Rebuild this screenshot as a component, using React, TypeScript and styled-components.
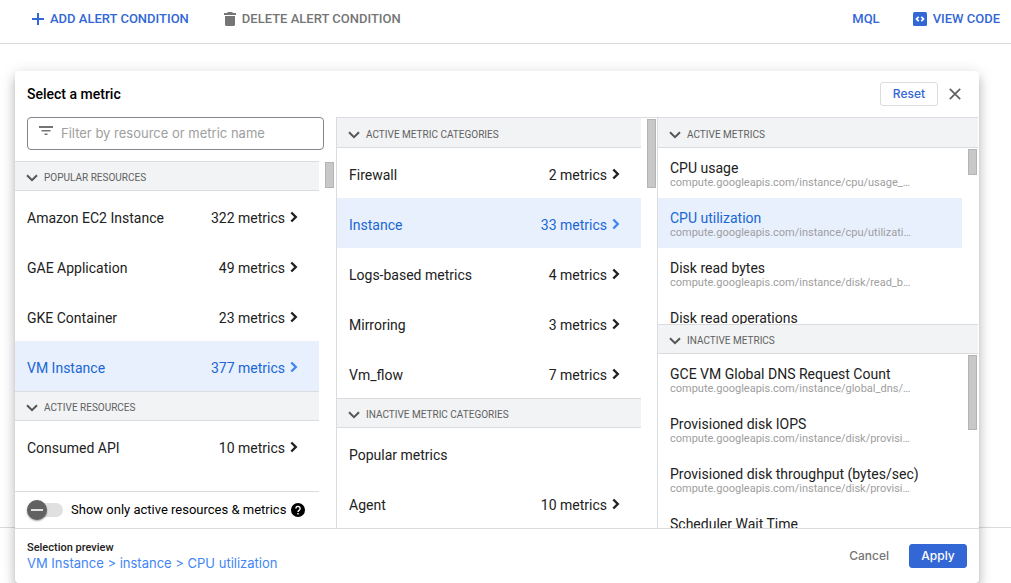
import React, { useState } from 'react';
import styled, { createGlobalStyle } from 'styled-components';

const BLUE = '#3367d6';
const LINE = '#dadce0';

const GlobalStyle = createGlobalStyle`
  * { box-sizing: border-box; }
  body {
    margin: 0;
    background: #fff;
    color: #212121;
    font-family: Roboto, "Liberation Sans", sans-serif;
  }
  button, input { font-family: inherit; margin: 0; }
`;

const Page = styled.div`
  min-height: 100vh;
`;

const Toolbar = styled.header`
  display: flex;
  align-items: center;
  justify-content: space-between;
  height: 44px;
  padding: 0 11px 6px 30px;
  border-bottom: 1px solid ${LINE};
`;

const ToolGroup = styled.div`
  display: flex;
  gap: 33px;
`;

const ToolButton = styled.button<{ $muted?: boolean }>`
  display: flex;
  align-items: center;
  gap: 6px;
  padding: 0;
  border: 0;
  background: none;
  color: ${p => (p.$muted ? '#757575' : BLUE)};
  font-size: 13px;
  font-weight: 500;
  line-height: 20px;
  text-transform: uppercase;
  white-space: nowrap;
`;

const Workspace = styled.main`
  position: relative;
  height: 484px;
  border-bottom: 1px solid ${LINE};
`;

const Dialog = styled.section`
  position: absolute;
  top: 27px;
  left: 15px;
  right: 32px;
  background: #fff;
  border-radius: 4px;
  box-shadow: 0 5px 5px -3px rgba(0, 0, 0, 0.2), 0 8px 10px 1px rgba(0, 0, 0, 0.14),
    0 3px 14px 2px rgba(0, 0, 0, 0.12);
`;

const DialogHeader = styled.div`
  display: flex;
  align-items: center;
  gap: 7px;
  height: 46px;
  padding: 0 14px 0 12px;
`;

const Title = styled.h1`
  flex: 1;
  margin: 0;
  color: #000;
  font-size: 14px;
  font-weight: 500;
  line-height: 20px;
`;

const ActionButton = styled.button<{ $kind: 'outline' | 'text' | 'solid' }>`
  height: 24px;
  min-width: 58px;
  padding: 0 11px;
  border-radius: 3px;
  border: 1px solid ${p => ({ outline: LINE, text: 'transparent', solid: BLUE })[p.$kind]};
  background: ${p => (p.$kind === 'solid' ? BLUE : 'none')};
  color: ${p => ({ outline: BLUE, text: '#757575', solid: '#fff' })[p.$kind]};
  font-family: Inter, sans-serif;
  font-size: 12px;
  font-weight: 500;
  line-height: 16px;
`;

const IconButton = styled.button`
  display: flex;
  padding: 4px;
  border: 0;
  background: none;
`;

const Columns = styled.div`
  display: grid;
  grid-template-columns: repeat(3, 1fr);
  height: 411px;
  padding-right: 1px;
`;

const ResourceColumn = styled.div`
  display: flex;
  flex-direction: column;
  min-width: 0;
  padding-right: 1px;
`;

const ListColumn = styled.div`
  display: flex;
  flex-direction: column;
  min-width: 0;
  border-top: 1px solid ${LINE};
  border-left: 1px solid ${LINE};
`;

const MetricColumn = styled(ListColumn)`
  display: grid;
  grid-template-rows: 206px 1fr;
  min-height: 0;
`;

const FilterBox = styled.label`
  display: flex;
  align-items: center;
  gap: 8px;
  height: 33px;
  margin: 0 11px 11px 12px;
  padding: 0 11px;
  border: 1px solid #80868b;
  border-radius: 4px;
`;

const FilterInput = styled.input`
  flex: 1;
  min-width: 0;
  padding: 0 0 2px;
  border: 0;
  outline: 0;
  background: none;
  font-family: Inter, sans-serif;
  font-size: 13px;
  line-height: 20px;
  &::placeholder { color: #9e9e9e; }
`;

const FilterIcon = styled.svg`
  margin-bottom: 6px;
`;

const ScrollArea = styled.div`
  display: flex;
  flex: 1;
  min-height: 0;
  overflow: hidden;
`;

const List = styled.div`
  flex: 1;
  min-width: 0;
`;

const ScrollTrack = styled.div`
  flex: none;
  width: 16px;
  padding: 1px 1px 0 6px;
`;

const ScrollThumb = styled.div<{ $size: number }>`
  height: ${p => p.$size}px;
  background: #c8c8c8;
  border: 1px solid #b4b4b4;
`;

const MetricSection = styled.section`
  display: flex;
  flex-direction: column;
  min-height: 0;
`;

const SectionButton = styled.button<{ $first?: boolean }>`
  display: flex;
  align-items: center;
  flex: none;
  gap: 6px;
  width: 100%;
  height: 30px;
  padding: ${p => (p.$first ? 4 : 3)}px 11px 0;
  border: 0;
  border-top: ${p => (p.$first ? '0' : `1px solid ${LINE}`)};
  border-bottom: 1px solid ${LINE};
  background: #f1f3f4;
  color: #616161;
  font-size: 10px;
  line-height: 16px;
  text-transform: uppercase;
  white-space: nowrap;
`;

const Row = styled.button<{ $selected?: boolean }>`
  display: flex;
  align-items: center;
  width: 100%;
  height: 50px;
  padding: 4px 21px 0 12px;
  border: 0;
  background: ${p => (p.$selected ? '#e8f0fe' : '#fff')};
  color: ${p => (p.$selected ? '#1967d2' : '#212121')};
  font-size: 14px;
  line-height: 20px;
  text-align: left;
  white-space: nowrap;
`;

const RowName = styled.span`
  flex: 1;
`;

const RowArrow = styled.svg`
  margin: 0 0 2px 5px;
`;

const MetricRow = styled(Row)`
  flex-direction: column;
  align-items: stretch;
  padding: 10px 12px 0;
`;

const MetricName = styled.span`
  line-height: 20px;
`;

const MetricPath = styled.span`
  color: #9e9e9e;
  font-size: 11px;
  line-height: 10px;
`;

const ToggleBar = styled.div`
  display: flex;
  align-items: center;
  height: 37px;
  margin-right: 16px;
  padding: 0 12px;
  border-top: 1px solid ${LINE};
  color: #000;
  font-size: 13px;
`;

const ToggleLabel = styled.label`
  display: flex;
  align-items: center;
  gap: 8px;
  line-height: 20px;
  white-space: nowrap;
`;

const Toggle = styled.input`
  appearance: none;
  display: flex;
  align-items: center;
  width: 36px;
  height: 14px;
  border-radius: 7px;
  background: #e0e0e0;
  &::before {
    content: '';
    width: 20px;
    height: 20px;
    flex: none;
    border-radius: 50%;
    background: linear-gradient(#e0e0e0, #e0e0e0) center / 12px 2px no-repeat #616161;
    box-shadow: 0 1px 2px rgba(0, 0, 0, 0.4);
  }
  &:checked::before { margin-left: 16px; background-color: ${BLUE}; }
`;

const HelpIcon = styled.svg`
  margin-left: 5px;
`;

const DialogFooter = styled.footer`
  display: flex;
  align-items: center;
  justify-content: space-between;
  height: 55px;
  padding: 0 12px;
  border-top: 1px solid ${LINE};
`;

const Preview = styled.div`
  display: flex;
  flex-direction: column;
  font-size: 11px;
  font-weight: 500;
  line-height: 14px;
`;

const PreviewLink = styled.a`
  color: #4285f4;
  font-family: Inter, sans-serif;
  font-size: 13px;
  font-weight: 400;
  line-height: 16px;
  text-decoration: none;
`;

const FooterActions = styled.div`
  display: flex;
  gap: 8px;
`;

type Entry = { name: string; count?: number };
type Metric = { name: string; path?: string };

const popularResources: Entry[] = [
  { name: 'Amazon EC2 Instance', count: 322 },
  { name: 'GAE Application', count: 49 },
  { name: 'GKE Container', count: 23 },
  { name: 'VM Instance', count: 377 },
];
const activeResources: Entry[] = [{ name: 'Consumed API', count: 10 }];
const activeCategories: Entry[] = [
  { name: 'Firewall', count: 2 },
  { name: 'Instance', count: 33 },
  { name: 'Logs-based metrics', count: 4 },
  { name: 'Mirroring', count: 3 },
  { name: 'Vm_flow', count: 7 },
];
const inactiveCategories: Entry[] = [{ name: 'Popular metrics' }, { name: 'Agent', count: 10 }];

const activeMetrics: Metric[] = [
  { name: 'CPU usage', path: 'cpu/usage_…' },
  { name: 'CPU utilization', path: 'cpu/utilizati…' },
  { name: 'Disk read bytes', path: 'disk/read_b…' },
  { name: 'Disk read operations' },
];
const inactiveMetrics: Metric[] = [
  { name: 'GCE VM Global DNS Request Count', path: 'global_dns/…' },
  { name: 'Provisioned disk IOPS', path: 'disk/provisi…' },
  { name: 'Provisioned disk throughput (bytes/sec)', path: 'disk/provisi…' },
  { name: 'Scheduler Wait Time' },
];

function SectionHead({ children, first }: { children: string; first?: boolean }) {
  return (
    <SectionButton $first={first}>
      <svg width="12" height="8" viewBox="0 0 12 8" fill="none" stroke="#555" strokeWidth="2">
        <path d="M1 1.2 6 6.2 11 1.2" />
      </svg>
      {children}
    </SectionButton>
  );
}

type Selection = { selected: string; onSelect: (name: string) => void };

function Rows({ items, selected, onSelect }: Selection & { items: Entry[] }) {
  return (
    <>
      {items.map(({ name, count }) => (
        <Row key={name} $selected={name === selected} onClick={() => onSelect(name)}>
          <RowName>{name}</RowName>
          {count !== undefined && (
            <>
              <span>{count} metrics</span>
              <RowArrow width="8" height="12" viewBox="0 0 8 12" fill="none" strokeWidth="2.4"
                stroke={name === selected ? '#4285f4' : '#212121'}>
                <path d="M1.3 1.5 5.8 6 1.3 10.5" />
              </RowArrow>
            </>
          )}
        </Row>
      ))}
    </>
  );
}

function Metrics({ items, selected, onSelect }: Selection & { items: Metric[] }) {
  return (
    <List>
      {items.map(({ name, path }) => (
        <MetricRow key={name} $selected={name === selected} onClick={() => onSelect(name)}>
          <MetricName>{name}</MetricName>
          {path && <MetricPath>compute.googleapis.com/instance/{path}</MetricPath>}
        </MetricRow>
      ))}
    </List>
  );
}

export default function App() {
  const [resource, setResource] = useState('VM Instance');
  const [category, setCategory] = useState('Instance');
  const [metric, setMetric] = useState('CPU utilization');
  return (
    <Page>
      <GlobalStyle />
      <Toolbar>
        <ToolGroup>
          <ToolButton>
            <svg width="14" height="14" viewBox="0 0 14 14" fill={BLUE}>
              <path d="M7 1h2v5h5v2H9v5H7V8H2V6h5z" />
            </svg>
            Add alert condition
          </ToolButton>
          <ToolButton $muted>
            <svg width="14" height="16" viewBox="0 0 14 16" fill="#757575">
              <path d="M6 1h4l1 1h3v2H2V2h3zM3 5h10v8.500a1.500 1.500 0 0 1-1.500 1.500h-7A1.500 1.500 0 0 1 3 13.500z" />
            </svg>
            Delete alert condition
          </ToolButton>
        </ToolGroup>
        <ToolGroup>
          <ToolButton>MQL</ToolButton>
          <ToolButton>
            <svg width="14" height="14" viewBox="0 0 14 14" fill="none">
              <rect width="14" height="14" rx="1.500" fill={BLUE} />
              <path d="M5.700 4.800 3.500 7l2.200 2.200M8.300 4.800 10.500 7 8.300 9.200" stroke="#fff" strokeWidth="1.700" />
            </svg>
            View code
          </ToolButton>
        </ToolGroup>
      </Toolbar>
      <Workspace>
        <Dialog role="dialog" aria-labelledby="dialog-title">
          <DialogHeader>
            <Title id="dialog-title">Select a metric</Title>
            <ActionButton $kind="outline">Reset</ActionButton>
            <IconButton aria-label="Close">
              <svg width="12" height="12" viewBox="0 0 12 12" stroke="#616161" strokeWidth="1.700">
                <path d="M.8.8l10.400 10.400M11.200.8.8 11.200" />
              </svg>
            </IconButton>
          </DialogHeader>
          <Columns>
            <ResourceColumn>
              <FilterBox>
                <FilterIcon width="14" height="11" viewBox="0 0 14 11" fill="#757575">
                  <path d="M0 1h14v2H0zM2.500 5h9v1.500h-9zM5.500 8.500h3V10h-3z" />
                </FilterIcon>
                <FilterInput aria-label="Filter" placeholder="Filter by resource or metric name" />
              </FilterBox>
              <ScrollArea>
                <List>
                  <SectionHead>Popular resources</SectionHead>
                  <Rows items={popularResources} selected={resource} onSelect={setResource} />
                  <SectionHead>Active resources</SectionHead>
                  <Rows items={activeResources} selected={resource} onSelect={setResource} />
                </List>
                <ScrollTrack><ScrollThumb $size={26} /></ScrollTrack>
              </ScrollArea>
              <ToggleBar>
                <ToggleLabel>
                  <Toggle type="checkbox" />
                  Show only active resources &amp; metrics
                </ToggleLabel>
                <HelpIcon width="14" height="14" viewBox="0 0 14 14" fill="none">
                  <circle cx="7" cy="7" r="7" fill="#000" />
                  <path d="M4.900 5.500a2.100 2.100 0 1 1 3.300 1.700C7.400 7.800 7 8 7 9" stroke="#fff" strokeWidth="1.400" />
                  <path d="M6.300 10h1.400v1.400H6.300z" fill="#fff" />
                </HelpIcon>
              </ToggleBar>
            </ResourceColumn>
            <ListColumn>
              <ScrollArea>
                <List>
                  <SectionHead first>Active metric categories</SectionHead>
                  <Rows items={activeCategories} selected={category} onSelect={setCategory} />
                  <SectionHead>Inactive metric categories</SectionHead>
                  <Rows items={inactiveCategories} selected={category} onSelect={setCategory} />
                </List>
                <ScrollTrack><ScrollThumb $size={69} /></ScrollTrack>
              </ScrollArea>
            </ListColumn>
            <MetricColumn>
              <MetricSection>
                <SectionHead first>Active metrics</SectionHead>
                <ScrollArea>
                  <Metrics items={activeMetrics} selected={metric} onSelect={setMetric} />
                  <ScrollTrack><ScrollThumb $size={26} /></ScrollTrack>
                </ScrollArea>
              </MetricSection>
              <MetricSection>
                <SectionHead>Inactive metrics</SectionHead>
                <ScrollArea>
                  <Metrics items={inactiveMetrics} selected={metric} onSelect={setMetric} />
                  <ScrollTrack><ScrollThumb $size={75} /></ScrollTrack>
                </ScrollArea>
              </MetricSection>
            </MetricColumn>
          </Columns>
          <DialogFooter>
            <Preview>
              Selection preview
              <PreviewLink href="#">{resource} &gt; {category.toLowerCase()} &gt; {metric}</PreviewLink>
            </Preview>
            <FooterActions>
              <ActionButton $kind="text">Cancel</ActionButton>
              <ActionButton $kind="solid">Apply</ActionButton>
            </FooterActions>
          </DialogFooter>
        </Dialog>
      </Workspace>
    </Page>
  );
}
